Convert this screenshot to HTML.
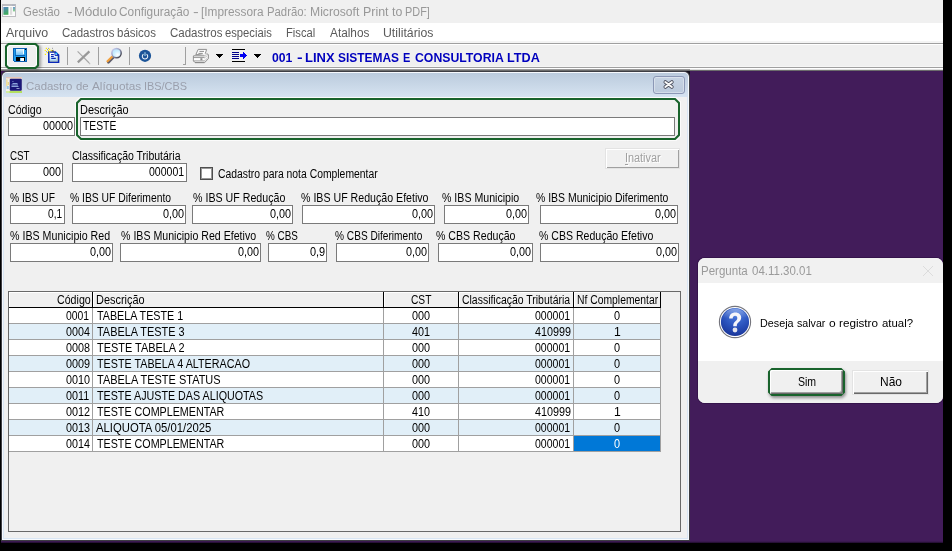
<!DOCTYPE html>
<html><head><meta charset="utf-8"><title>Gestão</title>
<style>
html,body{margin:0;padding:0;}
body{width:952px;height:551px;overflow:hidden;background:#000;position:relative;font-family:"Liberation Sans",sans-serif;}
#app{position:absolute;left:0;top:0;width:943px;height:543px;overflow:hidden;background:#421c5a;}
#app div, #app span.t, #app svg{position:absolute;}
span.t{white-space:nowrap;line-height:16px;height:16px;transform-origin:0 50%;display:block;}
</style></head><body>
<div id="app">
<!-- left black edge -->
<div style="left:0;top:0;width:1px;height:543px;background:#000;z-index:50"></div>
<!-- title bar -->
<div style="left:1px;top:0;width:942px;height:23px;background:#f0f0f0"></div>
<!-- menu bar -->
<div style="left:1px;top:23px;width:942px;height:18px;background:#fff"></div>
<div style="left:1px;top:41px;width:942px;height:2px;background:#f4f4f4"></div>
<div style="left:1px;top:43px;width:942px;height:1px;background:#a0a0a0"></div>
<div style="left:1px;top:44px;width:942px;height:1px;background:#fff"></div>
<!-- toolbar -->
<div style="left:1px;top:45px;width:942px;height:22px;background:#f0f0f0"></div>
<div style="left:1px;top:67px;width:942px;height:1px;background:#a0a0a0"></div>
<div style="left:1px;top:66px;width:942px;height:1px;background:#f6f6f6"></div>
<div style="left:1px;top:68px;width:942px;height:1px;background:#fff"></div>
<div style="left:1px;top:69px;width:942px;height:1px;background:#dedede"></div>
<div style="left:1px;top:69px;width:689px;height:1px;background:#9c9c9c"></div>
<div style="left:1px;top:70px;width:942px;height:1px;background:#6c6c6c"></div>
<div style="left:1px;top:44px;width:2px;height:23px;background:#fafafa"></div>

<!-- save focus -->
<svg style="left:3px;top:41px;filter:drop-shadow(2px 1px 1.5px rgba(0,0,0,.35));" width="38" height="30" viewBox="-2 -2 38 30"><path d="M3.5 1 H30.5 L33 3.5 V22.5 L30.5 25 H3.5 L1 22.5 V3.5 Z" stroke="#19632c" stroke-width="2" fill="#f0f0f0" stroke-linejoin="miter"/><path d="M5.0 2.5 H29.0 L31.5 5.0 V21.0 L29.0 23.5 H5.0 L2.5 21.0 V5.0 Z" stroke="#ffffff" stroke-opacity=".9" stroke-width="1" fill="none"/></svg>
<!-- save icon -->
<svg style="left:13px;top:48px" width="14" height="14" viewBox="0 0 14 14" shape-rendering="crispEdges">
 <defs><linearGradient id="sv" x1="0" y1="0" x2="0" y2="1"><stop offset="0" stop-color="#e2f4ff"/><stop offset="1" stop-color="#6fc0f6"/></linearGradient></defs>
 <rect x="0" y="0" width="14" height="14" fill="#0c5fb0"/>
 <rect x="1" y="1" width="12" height="12" fill="#1f9beb"/>
 <rect x="0" y="13" width="1" height="1" fill="#f0f0f0"/>
 <rect x="3" y="1" width="8" height="6" fill="url(#sv)"/>
 <rect x="2" y="1" width="1" height="6" fill="#0f74c8"/>
 <rect x="10" y="1" width="1" height="5" fill="#fff"/>
 <rect x="2" y="7" width="10" height="1" fill="#0c63b6"/>
 <rect x="12" y="1" width="1" height="1" fill="#000"/>
 <rect x="3" y="9" width="9" height="4" fill="#000"/>
 <rect x="7" y="10" width="4" height="3" fill="#fff"/>
 <rect x="7" y="10" width="1" height="3" fill="#9fe0ff"/>
</svg>
<!-- new doc icon -->
<svg style="left:44px;top:47px" width="17" height="17" viewBox="0 0 17 17">
 <defs><linearGradient id="nd" x1="0" y1="0" x2="0" y2="1"><stop offset="0.3" stop-color="#ffffff"/><stop offset="1" stop-color="#8fd0f8"/></linearGradient></defs>
 <path d="M4.8 4.9 H11.4 L14.6 8.1 V15.3 H4.8 Z" fill="url(#nd)" stroke="#0a28b8" stroke-width="1.5" stroke-linejoin="miter"/>
 <path d="M11 5.2 V8.4 H14.2" fill="none" stroke="#0a28b8" stroke-width="1"/>
 <path d="M13.4 9.2 V14.2 H6" fill="none" stroke="#a8a8a8" stroke-width=".8"/>
 <circle cx="12.4" cy="6.5" r="0.9" fill="#12c0f4"/>
 <path d="M7 7.5 H9.8 M7 9.4 H9.8 M7.2 11.4 H11.8" stroke="#0a28b8" stroke-width="1.1"/>
 <path d="M8.4 3.2 L9.4 5" stroke="#505050" stroke-width="1.6"/>
 <rect x="1.8" y="0.8" width="1.2" height="1.2" fill="#fff000"/><rect x="0.7" y="2.9" width="1.2" height="1.2" fill="#fff000"/><rect x="3.9" y="2.9" width="1.2" height="1.2" fill="#fff000"/><rect x="5.0" y="1.7" width="1.2" height="1.2" fill="#fff000"/><rect x="5.0" y="4.4" width="1.2" height="1.2" fill="#fff000"/><rect x="2.8" y="5.0" width="1.2" height="1.2" fill="#fff000"/><rect x="6.9" y="2.9" width="1.2" height="1.2" fill="#fff000"/><rect x="0.8" y="6.8" width="1.2" height="1.2" fill="#fff000"/><rect x="4.0" y="0.9" width="1" height="1" fill="#9a9a9a"/><rect x="8.0" y="0.8" width="1" height="1" fill="#9a9a9a"/><rect x="2.0" y="4.1" width="1" height="1" fill="#9a9a9a"/><rect x="6.1" y="3.7" width="1" height="1" fill="#9a9a9a"/><rect x="3.0" y="2.1" width="1" height="1" fill="#9a9a9a"/>
</svg>
<div style="left:67px;top:47px;width:1px;height:18px;background:#a0a0a0"></div>
<!-- X icon -->
<svg style="left:75px;top:48.5px" width="16" height="16" viewBox="0 0 16 16">
 <path d="M2.6 2.4 L14.2 14" stroke="#a6a6a6" stroke-width="1.1" fill="none"/>
 <path d="M14.4 2.4 L2.8 13.4" stroke="#989898" stroke-width="2.2" fill="none"/>
 <rect x="14.2" y="14.2" width="1" height="1" fill="#a0a0a0"/>
</svg>
<div style="left:98px;top:47px;width:1px;height:18px;background:#a0a0a0"></div>
<!-- magnifier -->
<svg style="left:105px;top:47px" width="18" height="18" viewBox="0 0 18 18">
 <defs><radialGradient id="mg" cx="0.62" cy="0.68" r="0.75"><stop offset="0" stop-color="#ffffff"/><stop offset="0.55" stop-color="#c9eeff"/><stop offset="1" stop-color="#b4e0fb"/></radialGradient>
 <linearGradient id="mr" x1="0.15" y1="0.15" x2="0.85" y2="0.85"><stop offset="0" stop-color="#c0c4e6"/><stop offset="0.5" stop-color="#9094b4"/><stop offset="1" stop-color="#484854"/></linearGradient></defs>
 <path d="M3.4 15.2 L8 10.6" stroke="#5c5c6c" stroke-width="2.8" stroke-linecap="round"/>
 <path d="M2.5 14.3 L7.1 9.7" stroke="#f2a03c" stroke-width="2.2" stroke-linecap="round"/>
 <circle cx="11.5" cy="6.1" r="4.7" fill="url(#mg)" stroke="url(#mr)" stroke-width="1.5"/>
</svg>
<div style="left:129px;top:47px;width:1px;height:18px;background:#a0a0a0"></div>
<!-- power -->
<svg style="left:138px;top:49px" width="14" height="14" viewBox="0 0 14 14">
 <circle cx="7" cy="6.8" r="6.1" fill="#1b5498"/>
 <path d="M5.4 5.2 A2.7 2.7 0 1 0 8.6 5.2" stroke="#eef4fa" stroke-width="1.05" fill="none"/>
 <path d="M7 3.2 L7 7" stroke="#a8d4ea" stroke-width="1.1"/>
</svg>
<div style="left:185px;top:47px;width:1px;height:18px;background:#a0a0a0"></div>
<div style="left:183px;top:64px;width:3px;height:1px;background:#a0a0a0"></div>
<!-- printer -->
<svg style="left:192px;top:48px" width="18" height="16" viewBox="0 0 18 16">
 <path d="M6.2 1.4 L14.6 1.4 L13 6.6 L3.8 6.6 Z" fill="#fcfcfc" stroke="#909090" stroke-width="1"/>
 <path d="M7.4 3.4 H12 M6.4 5.4 H10.8" stroke="#909090" stroke-width="1"/>
 <path d="M1.4 8 L1.4 12.8 L3 14.6 L12.6 14.6 L16.4 10.6 L16.4 6.6 L14.6 5.6" fill="#f4f4f4" stroke="#909090" stroke-width="1"/>
 <path d="M1.4 7.8 H12.6 M1.4 9.7 H12.6 M1.4 12.8 H12.6 M3 14.6 H12.4" stroke="#8c8c8c" stroke-width="1" fill="none"/>
 <rect x="1.9" y="10.2" width="10.4" height="2.1" fill="#fff"/>
 <rect x="8.4" y="10.2" width="2" height="2.1" fill="#8a8a8a"/>
 <path d="M12.8 7.6 L16.2 5.6 M12.8 9.6 L16.2 7 M12.8 12.6 L16.2 9.4 M12.8 14.4 L16.2 10.8" stroke="#a8a8a8" stroke-width="1" stroke-dasharray="1 1"/>
</svg>
<svg style="left:216px;top:54px" width="7" height="4" viewBox="0 0 7 4" shape-rendering="crispEdges"><path d="M0 0 H7 V1 H0Z M1 1 H6 V2 H1Z M2 2 H5 V3 H2Z M3 3 H4 V4 H3Z" fill="#000"/></svg>
<!-- list arrow -->
<svg style="left:232px;top:49px" width="16" height="14" viewBox="0 0 16 14" shape-rendering="crispEdges">
 <rect x="0" y="0" width="13" height="1" fill="#000"/>
 <rect x="0" y="12" width="13" height="1" fill="#000"/>
 <rect x="0" y="3" width="7" height="1" fill="#00008b"/>
 <rect x="0" y="5" width="7" height="1" fill="#00008b"/>
 <rect x="0" y="7" width="7" height="1" fill="#00008b"/>
 <rect x="0" y="9" width="7" height="1" fill="#00008b"/>
 <path d="M8 5 H11 V3 H12 V4 H13 V5 H14 V6 H15 V7 H14 V8 H13 V9 H12 V10 H11 V8 H8 Z" fill="#0000f0"/>
</svg>
<svg style="left:254px;top:54px" width="7" height="4" viewBox="0 0 7 4" shape-rendering="crispEdges"><path d="M0 0 H7 V1 H0Z M1 1 H6 V2 H1Z M2 2 H5 V3 H2Z M3 3 H4 V4 H3Z" fill="#000"/></svg>
<!-- app icon in title -->
<svg style="left:2px;top:4px" width="14" height="13" viewBox="0 0 14 13">
 <defs><linearGradient id="ai" x1="0" y1="0" x2="0.3" y2="1"><stop offset="0" stop-color="#5583c4"/><stop offset="1" stop-color="#3fab5c"/></linearGradient>
 <linearGradient id="aj" x1="0" y1="0" x2="0" y2="1"><stop offset="0" stop-color="#6a9ad0"/><stop offset="1" stop-color="#8fd48a"/></linearGradient></defs>
 <rect x="0.5" y="0.5" width="13" height="12" fill="#fbfbfb" stroke="#bcbcc0"/>
 <rect x="0" y="0" width="14" height="2" fill="#bcbcc0"/>
 <rect x="10" y="0.6" width="3" height="1" fill="#a8aec0"/>
 <rect x="1.4" y="3" width="5" height="7.8" fill="url(#ai)"/>
 <rect x="8" y="3" width="2.2" height="7.8" fill="#dedede"/>
 <rect x="11" y="3" width="2" height="4.4" fill="url(#aj)"/>
</svg>

<!-- child window -->
<div style="left:685px;top:71px;width:5px;height:5px;background:#15101c"></div>
<div id="cw" style="left:2px;top:72px;width:687px;height:468px;background:#f6f9fd;border-radius:5px 5px 0 0;box-shadow:0 0 0 1px #3e3e44;"></div>
<div style="left:3px;top:73px;width:685px;height:466px;border-radius:4px 4px 0 0;background:#d9e6f4"></div>
<div style="left:3px;top:73px;width:685px;height:24px;border-radius:4px 4px 0 0;background:linear-gradient(#bbcbdd,#d6e3f1)"></div>
<div style="left:4px;top:97px;width:683px;height:441px;background:#f0f0f0"></div>
<div style="left:1px;top:541px;width:942px;height:2px;background:linear-gradient(#451e5e,#1e0c2a)"></div>

<!-- child icon -->
<svg style="left:6px;top:77px" width="16" height="16" viewBox="0 0 16 16">
 <rect x="0" y="0" width="16" height="16" fill="#e9e3d8"/>
 <rect x="0" y="0" width="16" height="1.5" fill="#e8c7b8"/>
 <rect x="0" y="1.5" width="3.6" height="12.5" fill="#f6f2e6"/><rect x="0.4" y="2.4" width="1" height="7" fill="#e6cf70"/><rect x="1.8" y="5" width="1" height="3" fill="#e6cf70"/>
 <rect x="0.6" y="9" width="2.2" height="3" fill="#9ac8e8"/>
 <rect x="0" y="14" width="16" height="2" fill="#b4e060"/>
 <rect x="0" y="14" width="3.5" height="2" fill="#fff" opacity=".4"/>
 <rect x="3.8" y="1.8" width="12" height="12" rx="1" fill="#1b1878"/>
 <path d="M5.5 9.5 H12.5 M5.5 8 H12 M6.5 6.5 H11.5 M6.5 5 L7.2 4.2" stroke="#9ab6e8" stroke-width=".9"/>
 <path d="M10.5 11.5 H13.5" stroke="#c8d4f0" stroke-width=".7"/>
</svg>
<!-- close btn -->
<div style="left:653px;top:76px;width:32px;height:18px;box-sizing:border-box;border:1px solid #8c98b6;border-radius:3px;background:linear-gradient(#c6d3e3,#bccadc);box-shadow:inset 0 0 0 1px rgba(255,255,255,.35)"></div>
<svg style="left:662px;top:79px" width="14" height="11" viewBox="0 0 14 11">
 <path d="M3.3 3 L9.9 8 M9.9 3 L3.3 8" stroke="#4a4e5c" stroke-width="3.6" stroke-linecap="round"/>
 <path d="M3.3 3 L9.9 8 M9.9 3 L3.3 8" stroke="#f8f8f8" stroke-width="2" stroke-linecap="round"/>
</svg>
<!-- desc focus box -->
<svg style="left:74px;top:96px;" width="608" height="46" viewBox="-2 -2 608 46"><path d="M3.5 -0.5 H600.5 L604.5 3.5 V38.5 L600.5 42.5 H3.5 L-0.5 38.5 V3.5 Z" stroke="#ffffff" stroke-opacity=".75" stroke-width="1" fill="none"/><path d="M5 1 H599 L603 5 V37 L599 41 H5 L1 37 V5 Z" stroke="#19632c" stroke-width="2" fill="none" stroke-linejoin="miter"/></svg>
<!-- checkbox -->
<div style="left:200px;top:167px;width:13px;height:13px;box-sizing:border-box;border:1px solid #4e4e4e;background:#fff;box-shadow:inset 0 0 0 1px #989898"></div>
<!-- Inativar button -->
<div style="left:626px;top:165px;width:3px;height:1px;background:#fff;z-index:3"></div><div style="left:625px;top:164px;width:3px;height:1px;background:#a0a0a0;z-index:3"></div>
<div style="left:606px;top:149px;width:73px;height:19px;box-sizing:border-box;background:#f0f0f0;box-shadow:inset 1px 1px 0 #fff, inset -1px -1px 0 #a0a0a0, 0 0 0 1px #e3e3e3"></div>

<div style="left:8px;top:117px;width:67px;height:19px;background:#fff;border:1px solid #7a7a7a;box-sizing:border-box;"></div>
<div style="left:80px;top:117px;width:595px;height:19px;background:#fff;border:1px solid #7a7a7a;box-sizing:border-box;"></div>
<div style="left:10px;top:163px;width:53px;height:19px;background:#fff;border:1px solid #7a7a7a;box-sizing:border-box;"></div>
<div style="left:72px;top:163px;width:115px;height:19px;background:#fff;border:1px solid #7a7a7a;box-sizing:border-box;"></div>
<div style="left:10px;top:205px;width:55px;height:19px;background:#fff;border:1px solid #7a7a7a;box-sizing:border-box;"></div>
<div style="left:72px;top:205px;width:114px;height:19px;background:#fff;border:1px solid #7a7a7a;box-sizing:border-box;"></div>
<div style="left:192px;top:205px;width:101px;height:19px;background:#fff;border:1px solid #7a7a7a;box-sizing:border-box;"></div>
<div style="left:302px;top:205px;width:133px;height:19px;background:#fff;border:1px solid #7a7a7a;box-sizing:border-box;"></div>
<div style="left:444px;top:205px;width:85px;height:19px;background:#fff;border:1px solid #7a7a7a;box-sizing:border-box;"></div>
<div style="left:540px;top:205px;width:138px;height:19px;background:#fff;border:1px solid #7a7a7a;box-sizing:border-box;"></div>
<div style="left:10px;top:243px;width:103px;height:19px;background:#fff;border:1px solid #7a7a7a;box-sizing:border-box;"></div>
<div style="left:120px;top:243px;width:141px;height:19px;background:#fff;border:1px solid #7a7a7a;box-sizing:border-box;"></div>
<div style="left:268px;top:243px;width:59px;height:19px;background:#fff;border:1px solid #7a7a7a;box-sizing:border-box;"></div>
<div style="left:336px;top:243px;width:93px;height:19px;background:#fff;border:1px solid #7a7a7a;box-sizing:border-box;"></div>
<div style="left:438px;top:243px;width:95px;height:19px;background:#fff;border:1px solid #7a7a7a;box-sizing:border-box;"></div>
<div style="left:540px;top:243px;width:139px;height:19px;background:#fff;border:1px solid #7a7a7a;box-sizing:border-box;"></div>
<div style="left:8px;top:291px;width:673px;height:241px;box-sizing:border-box;border:1px solid #696969;background:#f0f0f0"></div>
<div style="left:9px;top:292px;width:83px;height:15px;background:#f0f0f0;box-shadow:inset 1px 1px 0 #fff"></div>
<div style="left:92px;top:292px;width:1px;height:16px;background:#000"></div>
<div style="left:93px;top:292px;width:290px;height:15px;background:#f0f0f0;box-shadow:inset 1px 1px 0 #fff"></div>
<div style="left:383px;top:292px;width:1px;height:16px;background:#000"></div>
<div style="left:384px;top:292px;width:74px;height:15px;background:#f0f0f0;box-shadow:inset 1px 1px 0 #fff"></div>
<div style="left:458px;top:292px;width:1px;height:16px;background:#000"></div>
<div style="left:459px;top:292px;width:114px;height:15px;background:#f0f0f0;box-shadow:inset 1px 1px 0 #fff"></div>
<div style="left:573px;top:292px;width:1px;height:16px;background:#000"></div>
<div style="left:574px;top:292px;width:86px;height:15px;background:#f0f0f0;box-shadow:inset 1px 1px 0 #fff"></div>
<div style="left:660px;top:292px;width:1px;height:16px;background:#000"></div>
<div style="left:9px;top:307px;width:652px;height:1px;background:#000"></div>
<div style="left:9px;top:308px;width:652px;height:15px;background:#fff"></div>
<div style="left:9px;top:323px;width:652px;height:1px;background:#a0a0a0"></div>
<div style="left:9px;top:324px;width:652px;height:15px;background:#e1eff8"></div>
<div style="left:9px;top:339px;width:652px;height:1px;background:#a0a0a0"></div>
<div style="left:9px;top:340px;width:652px;height:15px;background:#fff"></div>
<div style="left:9px;top:355px;width:652px;height:1px;background:#a0a0a0"></div>
<div style="left:9px;top:356px;width:652px;height:15px;background:#e1eff8"></div>
<div style="left:9px;top:371px;width:652px;height:1px;background:#a0a0a0"></div>
<div style="left:9px;top:372px;width:652px;height:15px;background:#fff"></div>
<div style="left:9px;top:387px;width:652px;height:1px;background:#a0a0a0"></div>
<div style="left:9px;top:388px;width:652px;height:15px;background:#e1eff8"></div>
<div style="left:9px;top:403px;width:652px;height:1px;background:#a0a0a0"></div>
<div style="left:9px;top:404px;width:652px;height:15px;background:#fff"></div>
<div style="left:9px;top:419px;width:652px;height:1px;background:#a0a0a0"></div>
<div style="left:9px;top:420px;width:652px;height:15px;background:#e1eff8"></div>
<div style="left:9px;top:435px;width:652px;height:1px;background:#a0a0a0"></div>
<div style="left:9px;top:436px;width:652px;height:15px;background:#fff"></div>
<div style="left:9px;top:451px;width:652px;height:1px;background:#a0a0a0"></div>
<div style="left:92px;top:308px;width:1px;height:144px;background:#a0a0a0"></div>
<div style="left:383px;top:308px;width:1px;height:144px;background:#a0a0a0"></div>
<div style="left:458px;top:308px;width:1px;height:144px;background:#a0a0a0"></div>
<div style="left:573px;top:308px;width:1px;height:144px;background:#a0a0a0"></div>
<div style="left:660px;top:308px;width:1px;height:144px;background:#a0a0a0"></div>
<div style="left:574px;top:436px;width:86px;height:15px;background:#0078d7"></div>

<div style="left:698px;top:258px;width:245px;height:145px;border-radius:7px;background:#fff;overflow:hidden;box-shadow:0 0 0 1px rgba(40,10,60,.5)">
 <div style="left:0;top:0;width:260px;height:25px;background:#f1f1f1"></div>
 <div style="left:0;top:103px;width:260px;height:42px;background:#f0f0f0"></div>
</div>
<svg style="left:922px;top:265px" width="12" height="12" viewBox="0 0 12 12"><path d="M1 1 L11 11 M11 1 L1 11" stroke="#dcdcdc" stroke-width="1" fill="none"/></svg>
<svg style="left:718px;top:305px" width="34" height="34" viewBox="0 0 34 34">
 <defs>
  <radialGradient id="qg" cx="0.55" cy="0.2" r="0.95"><stop offset="0" stop-color="#4f7fe0"/><stop offset="0.5" stop-color="#2a52bc"/><stop offset="1" stop-color="#13298a"/></radialGradient>
  <linearGradient id="qh" x1="0" y1="0" x2="0" y2="1"><stop offset="0" stop-color="#fff" stop-opacity=".35"/><stop offset="1" stop-color="#fff" stop-opacity="0"/></linearGradient>
 </defs>
 <circle cx="17" cy="17" r="15.6" fill="#fff" stroke="#75757d" stroke-width="1.1"/>
 <circle cx="17" cy="17" r="14.1" fill="url(#qg)"/>
 <path d="M4.5 13 A13 13 0 0 1 29.5 13 C22 11 12 14 4.500 13 Z" fill="url(#qh)"/>
 <path d="M11.2 13.4 C11.2 9.4 14 7.4 17.3 7.4 C20.8 7.4 23.2 9.5 23.2 12.6 C23.2 15 21.9 16.3 20.4 17.5 C19.2 18.5 18.8 19.3 18.8 21.2 L15.2 21.2 C15.2 18.6 15.9 17.4 17.4 16.2 C18.7 15.1 19.3 14.3 19.3 13 C19.3 11.6 18.4 10.8 17.1 10.8 C15.7 10.8 14.8 11.8 14.7 13.4 Z" fill="#f6f6fa"/>
 <circle cx="17" cy="25" r="2.4" fill="#e4e4ec"/>
</svg>
<!-- Sim focus + button -->
<svg style="left:766px;top:366px;filter:drop-shadow(1px 2px 1.5px rgba(0,0,0,.4));" width="81" height="32" viewBox="-2 -2 81 32"><path d="M4 1 H73 L76 4 V24 L73 27 H4 L1 24 V4 Z" stroke="#19632c" stroke-width="2" fill="#f0f0f0" stroke-linejoin="miter"/></svg>
<div style="left:770px;top:370px;width:73px;height:24px;box-sizing:border-box;background:#f0f0f0;border-radius:2px;box-shadow:inset 1px 1px 0 #fff, inset -1px -1px 0 #696969, inset -2px -2px 0 #a0a0a0"></div>
<div style="left:853px;top:371px;width:75px;height:23px;box-sizing:border-box;background:#f0f0f0;box-shadow:inset 1px 1px 0 #fff, inset -1px -1px 0 #696969, inset -2px -2px 0 #a0a0a0, 0 0 0 1px #e3e3e3"></div>

<span class="t" style="left:22.83px;top:3.64px;font-size:12px;color:#989898;transform:scaleX(0.9522);">Gestão</span>
<span class="t" style="left:66.93px;top:3.64px;font-size:12px;color:#989898;transform:scaleX(1.4000);">-</span>
<span class="t" style="left:73.85px;top:3.64px;font-size:12px;color:#989898;transform:scaleX(1.0975);">Módulo</span>
<span class="t" style="left:119.11px;top:3.64px;font-size:12px;color:#989898;transform:scaleX(0.9860);">Configuração</span>
<span class="t" style="left:192.91px;top:3.64px;font-size:12px;color:#989898;transform:scaleX(1.4333);">-</span>
<span class="t" style="left:200.87px;top:3.64px;font-size:12px;color:#989898;transform:scaleX(0.9863);">[Impressora</span>
<span class="t" style="left:266.99px;top:3.64px;font-size:12px;color:#989898;transform:scaleX(0.9446);">Padrão:</span>
<span class="t" style="left:310.03px;top:3.64px;font-size:12px;color:#989898;transform:scaleX(1.0130);">Microsoft</span>
<span class="t" style="left:363.01px;top:3.64px;font-size:12px;color:#989898;transform:scaleX(1.0346);">Print</span>
<span class="t" style="left:391.71px;top:3.64px;font-size:12px;color:#989898;transform:scaleX(1.0285);">to</span>
<span class="t" style="left:405.33px;top:3.64px;font-size:12px;color:#989898;transform:scaleX(0.9077);">PDF]</span>
<span class="t" style="left:6.30px;top:24.84px;font-size:12px;color:#5a5a5a;transform:scaleX(1.0350);">Arquivo</span>
<span class="t" style="left:62.03px;top:24.84px;font-size:12px;color:#5a5a5a;transform:scaleX(0.9577);">Cadastros</span>
<span class="t" style="left:117.11px;top:24.84px;font-size:12px;color:#5a5a5a;transform:scaleX(0.9558);">básicos</span>
<span class="t" style="left:170.03px;top:24.84px;font-size:12px;color:#5a5a5a;transform:scaleX(0.9577);">Cadastros</span>
<span class="t" style="left:225.35px;top:24.84px;font-size:12px;color:#5a5a5a;transform:scaleX(0.9363);">especiais</span>
<span class="t" style="left:285.90px;top:24.84px;font-size:12px;color:#5a5a5a;transform:scaleX(0.9349);">Fiscal</span>
<span class="t" style="left:329.70px;top:24.84px;font-size:12px;color:#5a5a5a;transform:scaleX(0.9847);">Atalhos</span>
<span class="t" style="left:382.98px;top:24.84px;font-size:12px;color:#5a5a5a;transform:scaleX(1.0225);">Utilitários</span>
<span class="t" style="left:271.97px;top:49.67px;font-size:12.5px;color:#0000be;transform:scaleX(0.9755);font-weight:bold;">001</span>
<span class="t" style="left:297.01px;top:49.67px;font-size:12.5px;color:#0000be;transform:scaleX(1.3538);font-weight:bold;">-</span>
<span class="t" style="left:304.56px;top:49.67px;font-size:12.5px;color:#0000be;transform:scaleX(1.0372);font-weight:bold;">LINX</span>
<span class="t" style="left:337.70px;top:49.67px;font-size:12.5px;color:#0000be;transform:scaleX(0.9553);font-weight:bold;">SISTEMAS</span>
<span class="t" style="left:402.59px;top:49.67px;font-size:12.5px;color:#0000be;transform:scaleX(0.8779);font-weight:bold;">E</span>
<span class="t" style="left:414.91px;top:49.67px;font-size:12.5px;color:#0000be;transform:scaleX(0.9807);font-weight:bold;">CONSULTORIA</span>
<span class="t" style="left:506.68px;top:49.67px;font-size:12.5px;color:#0000be;transform:scaleX(1.0125);font-weight:bold;">LTDA</span>
<span class="t" style="left:26.03px;top:77.71px;font-size:11.8px;color:#9a9fac;transform:scaleX(0.9700);">Cadastro</span>
<span class="t" style="left:76.25px;top:77.71px;font-size:11.8px;color:#9a9fac;transform:scaleX(0.9616);">de</span>
<span class="t" style="left:92.20px;top:77.71px;font-size:11.8px;color:#9a9fac;transform:scaleX(1.0003);">Alíquotas</span>
<span class="t" style="left:144.22px;top:77.71px;font-size:11.8px;color:#9a9fac;transform:scaleX(0.9244);">IBS/CBS</span>
<span class="t" style="left:7.97px;top:102.17px;font-size:12.5px;color:#000;transform:scaleX(0.8500);">Código</span>
<span class="t" style="left:80.03px;top:102.17px;font-size:12.5px;color:#000;transform:scaleX(0.8750);">Descrição</span>
<span class="t" style="left:10.41px;top:148.17px;font-size:12.5px;color:#000;transform:scaleX(0.7838);">CST</span>
<span class="t" style="left:72.08px;top:148.17px;font-size:12.5px;color:#000;transform:scaleX(0.8396);">Classificação Tributária</span>
<span class="t" style="left:218.28px;top:166.17px;font-size:12.5px;color:#000;transform:scaleX(0.8295);">Cadastro para nota Complementar</span>
<span class="t" style="left:10.24px;top:190.17px;font-size:12.5px;color:#000;transform:scaleX(0.8187);">% IBS UF</span>
<span class="t" style="left:70.34px;top:190.17px;font-size:12.5px;color:#000;transform:scaleX(0.8269);">% IBS UF Diferimento</span>
<span class="t" style="left:192.53px;top:190.17px;font-size:12.5px;color:#000;transform:scaleX(0.8517);">% IBS UF Redução</span>
<span class="t" style="left:301.03px;top:190.17px;font-size:12.5px;color:#000;transform:scaleX(0.8497);">% IBS UF Redução Efetivo</span>
<span class="t" style="left:441.73px;top:190.17px;font-size:12.5px;color:#000;transform:scaleX(0.8483);">% IBS Municipio</span>
<span class="t" style="left:536.33px;top:190.17px;font-size:12.5px;color:#000;transform:scaleX(0.8359);">% IBS Municipio Diferimento</span>
<span class="t" style="left:10.23px;top:228.27px;font-size:12.5px;color:#000;transform:scaleX(0.8528);">% IBS Municipio Red</span>
<span class="t" style="left:120.63px;top:228.27px;font-size:12.5px;color:#000;transform:scaleX(0.8492);">% IBS Municipio Red Efetivo</span>
<span class="t" style="left:266.25px;top:228.27px;font-size:12.5px;color:#000;transform:scaleX(0.7908);">% CBS</span>
<span class="t" style="left:335.15px;top:228.27px;font-size:12.5px;color:#000;transform:scaleX(0.8105);">% CBS Diferimento</span>
<span class="t" style="left:436.03px;top:228.27px;font-size:12.5px;color:#000;transform:scaleX(0.8476);">% CBS Redução</span>
<span class="t" style="left:539.33px;top:228.27px;font-size:12.5px;color:#000;transform:scaleX(0.8437);">% CBS Redução Efetivo</span>
<span class="t" style="left:43.32px;top:117.67px;font-size:12.5px;color:#000;transform:scaleX(0.8651);">00000</span>
<span class="t" style="left:83.29px;top:117.67px;font-size:12.5px;color:#000;transform:scaleX(0.8277);">TESTE</span>
<span class="t" style="left:43.32px;top:163.67px;font-size:12.5px;color:#000;transform:scaleX(0.8665);">000</span>
<span class="t" style="left:149.33px;top:163.67px;font-size:12.5px;color:#000;transform:scaleX(0.8428);">000001</span>
<span class="t" style="left:48.34px;top:205.67px;font-size:12.5px;color:#000;transform:scaleX(0.8128);">0,1</span>
<span class="t" style="left:163.32px;top:205.67px;font-size:12.5px;color:#000;transform:scaleX(0.8661);">0,00</span>
<span class="t" style="left:270.32px;top:205.67px;font-size:12.5px;color:#000;transform:scaleX(0.8661);">0,00</span>
<span class="t" style="left:412.32px;top:205.67px;font-size:12.5px;color:#000;transform:scaleX(0.8661);">0,00</span>
<span class="t" style="left:506.32px;top:205.67px;font-size:12.5px;color:#000;transform:scaleX(0.8661);">0,00</span>
<span class="t" style="left:655.32px;top:205.67px;font-size:12.5px;color:#000;transform:scaleX(0.8661);">0,00</span>
<span class="t" style="left:90.32px;top:243.67px;font-size:12.5px;color:#000;transform:scaleX(0.8661);">0,00</span>
<span class="t" style="left:238.32px;top:243.67px;font-size:12.5px;color:#000;transform:scaleX(0.8661);">0,00</span>
<span class="t" style="left:310.32px;top:243.67px;font-size:12.5px;color:#000;transform:scaleX(0.8740);">0,9</span>
<span class="t" style="left:406.32px;top:243.67px;font-size:12.5px;color:#000;transform:scaleX(0.8661);">0,00</span>
<span class="t" style="left:510.32px;top:243.67px;font-size:12.5px;color:#000;transform:scaleX(0.8661);">0,00</span>
<span class="t" style="left:656.32px;top:243.67px;font-size:12.5px;color:#000;transform:scaleX(0.8661);">0,00</span>
<span class="t" style="left:625.72px;top:151.37px;font-size:12.5px;color:#fff;transform:scaleX(0.8689);">Inativar</span>
<span class="t" style="left:624.72px;top:150.37px;font-size:12.5px;color:#a0a0a0;transform:scaleX(0.8689);">Inativar</span>
<span class="t" style="left:57.17px;top:291.67px;font-size:12.5px;color:#000;transform:scaleX(0.8526);">Código</span>
<span class="t" style="left:95.53px;top:291.67px;font-size:12.5px;color:#000;transform:scaleX(0.8750);">Descrição</span>
<span class="t" style="left:410.99px;top:291.67px;font-size:12.5px;color:#000;transform:scaleX(0.8169);">CST</span>
<span class="t" style="left:462.38px;top:291.67px;font-size:12.5px;color:#000;transform:scaleX(0.8365);">Classificação Tributária</span>
<span class="t" style="left:576.67px;top:291.67px;font-size:12.5px;color:#000;transform:scaleX(0.8286);">Nf Complementar</span>
<span class="t" style="left:66.24px;top:307.97px;font-size:12.5px;color:#000;transform:scaleX(0.8323);">0001</span>
<span class="t" style="left:96.59px;top:307.97px;font-size:12.5px;color:#000;transform:scaleX(0.8589);">TABELA TESTE 1</span>
<span class="t" style="left:412.27px;top:307.97px;font-size:12.5px;color:#000;transform:scaleX(0.8665);">000</span>
<span class="t" style="left:535.33px;top:307.97px;font-size:12.5px;color:#000;transform:scaleX(0.8428);">000001</span>
<span class="t" style="left:614.17px;top:307.97px;font-size:12.5px;color:#000;transform:scaleX(0.8742);">0</span>
<span class="t" style="left:66.22px;top:323.97px;font-size:12.5px;color:#000;transform:scaleX(0.8579);">0004</span>
<span class="t" style="left:96.58px;top:323.97px;font-size:12.5px;color:#000;transform:scaleX(0.8733);">TABELA TESTE 3</span>
<span class="t" style="left:412.43px;top:323.97px;font-size:12.5px;color:#000;transform:scaleX(0.8638);">401</span>
<span class="t" style="left:535.48px;top:323.97px;font-size:12.5px;color:#000;transform:scaleX(0.8634);">410999</span>
<span class="t" style="left:613.64px;top:323.97px;font-size:12.5px;color:#000;transform:scaleX(0.9747);">1</span>
<span class="t" style="left:66.22px;top:339.97px;font-size:12.5px;color:#000;transform:scaleX(0.8639);">0008</span>
<span class="t" style="left:96.58px;top:339.97px;font-size:12.5px;color:#000;transform:scaleX(0.8738);">TESTE TABELA 2</span>
<span class="t" style="left:412.27px;top:339.97px;font-size:12.5px;color:#000;transform:scaleX(0.8665);">000</span>
<span class="t" style="left:535.33px;top:339.97px;font-size:12.5px;color:#000;transform:scaleX(0.8428);">000001</span>
<span class="t" style="left:614.17px;top:339.97px;font-size:12.5px;color:#000;transform:scaleX(0.8742);">0</span>
<span class="t" style="left:66.22px;top:355.97px;font-size:12.5px;color:#000;transform:scaleX(0.8659);">0009</span>
<span class="t" style="left:96.58px;top:355.97px;font-size:12.5px;color:#000;transform:scaleX(0.8606);">TESTE TABELA 4 ALTERACAO</span>
<span class="t" style="left:412.27px;top:355.97px;font-size:12.5px;color:#000;transform:scaleX(0.8665);">000</span>
<span class="t" style="left:535.33px;top:355.97px;font-size:12.5px;color:#000;transform:scaleX(0.8428);">000001</span>
<span class="t" style="left:614.17px;top:355.97px;font-size:12.5px;color:#000;transform:scaleX(0.8742);">0</span>
<span class="t" style="left:66.22px;top:371.97px;font-size:12.5px;color:#000;transform:scaleX(0.8619);">0010</span>
<span class="t" style="left:96.58px;top:371.97px;font-size:12.5px;color:#000;transform:scaleX(0.8778);">TABELA TESTE STATUS</span>
<span class="t" style="left:412.27px;top:371.97px;font-size:12.5px;color:#000;transform:scaleX(0.8665);">000</span>
<span class="t" style="left:535.33px;top:371.97px;font-size:12.5px;color:#000;transform:scaleX(0.8428);">000001</span>
<span class="t" style="left:614.17px;top:371.97px;font-size:12.5px;color:#000;transform:scaleX(0.8742);">0</span>
<span class="t" style="left:66.22px;top:387.97px;font-size:12.5px;color:#000;transform:scaleX(0.8622);">0011</span>
<span class="t" style="left:96.59px;top:387.97px;font-size:12.5px;color:#000;transform:scaleX(0.8585);">TESTE AJUSTE DAS ALIQUOTAS</span>
<span class="t" style="left:412.27px;top:387.97px;font-size:12.5px;color:#000;transform:scaleX(0.8665);">000</span>
<span class="t" style="left:535.33px;top:387.97px;font-size:12.5px;color:#000;transform:scaleX(0.8428);">000001</span>
<span class="t" style="left:614.17px;top:387.97px;font-size:12.5px;color:#000;transform:scaleX(0.8742);">0</span>
<span class="t" style="left:66.22px;top:403.97px;font-size:12.5px;color:#000;transform:scaleX(0.8659);">0012</span>
<span class="t" style="left:96.59px;top:403.97px;font-size:12.5px;color:#000;transform:scaleX(0.8583);">TESTE COMPLEMENTAR</span>
<span class="t" style="left:412.44px;top:403.97px;font-size:12.5px;color:#000;transform:scaleX(0.8584);">410</span>
<span class="t" style="left:535.48px;top:403.97px;font-size:12.5px;color:#000;transform:scaleX(0.8634);">410999</span>
<span class="t" style="left:613.64px;top:403.97px;font-size:12.5px;color:#000;transform:scaleX(0.9747);">1</span>
<span class="t" style="left:66.22px;top:419.97px;font-size:12.5px;color:#000;transform:scaleX(0.8639);">0013</span>
<span class="t" style="left:96.00px;top:419.97px;font-size:12.5px;color:#000;transform:scaleX(0.9038);">ALIQUOTA 05/01/2025</span>
<span class="t" style="left:412.27px;top:419.97px;font-size:12.5px;color:#000;transform:scaleX(0.8665);">000</span>
<span class="t" style="left:535.33px;top:419.97px;font-size:12.5px;color:#000;transform:scaleX(0.8428);">000001</span>
<span class="t" style="left:614.17px;top:419.97px;font-size:12.5px;color:#000;transform:scaleX(0.8742);">0</span>
<span class="t" style="left:66.22px;top:435.97px;font-size:12.5px;color:#000;transform:scaleX(0.8579);">0014</span>
<span class="t" style="left:96.59px;top:435.97px;font-size:12.5px;color:#000;transform:scaleX(0.8583);">TESTE COMPLEMENTAR</span>
<span class="t" style="left:412.27px;top:435.97px;font-size:12.5px;color:#000;transform:scaleX(0.8665);">000</span>
<span class="t" style="left:535.33px;top:435.97px;font-size:12.5px;color:#000;transform:scaleX(0.8428);">000001</span>
<span class="t" style="left:614.17px;top:435.97px;font-size:12.5px;color:#fff;transform:scaleX(0.8742);">0</span>
<span class="t" style="left:700.88px;top:262.84px;font-size:12px;color:#9a9a9a;transform:scaleX(0.9605);">Pergunta</span>
<span class="t" style="left:751.50px;top:262.84px;font-size:12px;color:#9a9a9a;transform:scaleX(0.9573);">04.11.30.01</span>
<span class="t" style="left:759.64px;top:314.81px;font-size:11.8px;color:#000;transform:scaleX(0.9126);">Deseja</span>
<span class="t" style="left:797.13px;top:314.81px;font-size:11.8px;color:#000;transform:scaleX(0.9024);">salvar</span>
<span class="t" style="left:829.02px;top:314.81px;font-size:11.8px;color:#000;transform:scaleX(1.0169);">o</span>
<span class="t" style="left:839.14px;top:314.81px;font-size:11.8px;color:#000;transform:scaleX(0.9923);">registro</span>
<span class="t" style="left:882.04px;top:314.81px;font-size:11.8px;color:#000;transform:scaleX(0.9663);">atual?</span>
<span class="t" style="left:798.03px;top:374.04px;font-size:12px;color:#000;transform:scaleX(0.8776);">Sim</span>
<span class="t" style="left:879.54px;top:374.04px;font-size:12px;color:#000;transform:scaleX(0.9971);">Não</span>
</div>
</body></html>
